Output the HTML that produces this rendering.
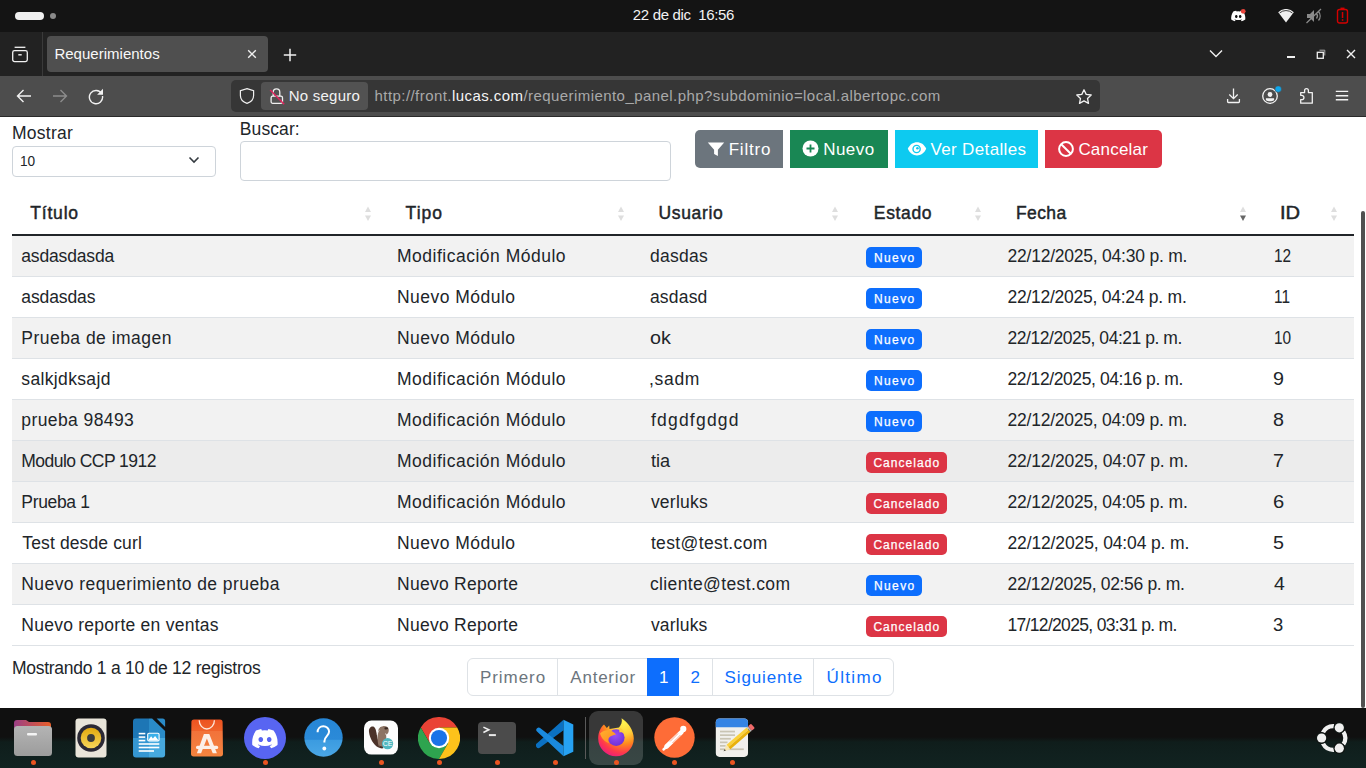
<!DOCTYPE html>
<html><head><meta charset="utf-8"><title>Requerimientos</title>
<style>
html,body{margin:0;padding:0;width:1366px;height:768px;overflow:hidden;background:#fff;font-family:"Liberation Sans",sans-serif;}
.r{position:absolute;display:block;}
.t{position:absolute;white-space:pre;font-family:"Liberation Sans",sans-serif;}
</style></head><body>
<div class="r" style="left:0px;top:0px;width:1366px;height:32px;background:#141414;"></div>
<div class="r" style="left:15px;top:12px;width:29px;height:8px;background:#f0f0f0;border-radius:4px;"></div>
<div class="r" style="left:50px;top:13px;width:6px;height:6px;background:#8a8a8a;border-radius:50%;"></div>
<span class="t" style="left:632.80px;top:7px;font-size:15px;line-height:15px;color:#f2f2f2;letter-spacing:-0.340px;">22 de dic  16:56</span>
<svg class="r" style="left:1229px;top:8px;" width="20" height="16" viewBox="0 0 20 16"><path fill="#fff" d="M14.2 3.6A12 12 0 0 0 11.3 2.7l-.4.8a11 11 0 0 0-3.3 0l-.4-.8A12 12 0 0 0 4.3 3.6C2.5 6.3 2 8.9 2.2 11.5a12 12 0 0 0 3.6 1.8l.8-1.2-1.3-.6.3-.3a8.5 8.5 0 0 0 7.3 0l.3.3-1.3.6.8 1.2a12 12 0 0 0 3.6-1.8c.3-3-.5-5.6-2.1-7.9zM7.3 9.9c-.7 0-1.3-.7-1.3-1.5s.6-1.5 1.3-1.5 1.3.7 1.3 1.5-.6 1.5-1.3 1.5zm3.9 0c-.7 0-1.3-.7-1.3-1.5s.6-1.5 1.3-1.5 1.3.7 1.3 1.5-.6 1.5-1.3 1.5z"/><circle cx="14.2" cy="3.3" r="2.4" fill="#e8453c"/></svg>
<svg class="r" style="left:1277px;top:9px;" width="18" height="14" viewBox="0 0 18 14"><path fill="#f0f0f0" d="M1.2 3.2A11 11 0 0 1 16.8 3.2L9 13.4z"/><path fill="none" stroke="#141414" stroke-width="0.8" d="M2.6 4.0A9.6 9.6 0 0 1 15.4 4.0"/></svg>
<svg class="r" style="left:1305px;top:8px;" width="18" height="16" viewBox="0 0 18 16"><path fill="#8a8a8a" d="M2 6h3l4-4v12l-4-4H2z"/><path fill="none" stroke="#8a8a8a" stroke-width="1.3" d="M11.5 5.5a4 4 0 0 1 0 5M13.5 3.5a7 7 0 0 1 0 9M1.5 15L16 1"/></svg>
<svg class="r" style="left:1336px;top:7px;" width="13" height="17" viewBox="0 0 13 17"><rect x="1.5" y="2.5" width="10" height="13.5" rx="2" fill="none" stroke="#d40000" stroke-width="1.4"/><rect x="4.5" y="0.6" width="4" height="1.6" fill="#d40000"/><rect x="5.8" y="5" width="1.5" height="6" fill="#d40000"/><rect x="5.8" y="12.2" width="1.5" height="1.6" fill="#d40000"/></svg>
<div class="r" style="left:0px;top:32px;width:1366px;height:44px;background:#222222;"></div>
<div class="r" style="left:42px;top:32px;width:1px;height:44px;background:#3a3a3a;"></div>
<svg class="r" style="left:10px;top:44px;" width="20" height="20" viewBox="0 0 20 20"><rect x="2.7" y="6.6" width="14.6" height="11" rx="1.8" fill="none" stroke="#f2f2f2" stroke-width="1.3"/><path d="M4.6 3.3h10.8" stroke="#f2f2f2" stroke-width="1.3" fill="none"/><path d="M8.3 10.8h3.4" stroke="#f2f2f2" stroke-width="1.4"/></svg>
<div class="r" style="left:47px;top:36px;width:221px;height:36px;background:#4f4f4f;border-radius:4px;"></div>
<span class="t" style="left:54.40px;top:46px;font-size:15px;line-height:15px;color:#f8f8f8;letter-spacing:0.015px;">Requerimientos</span>
<svg class="r" style="left:246px;top:48px;" width="12" height="12" viewBox="0 0 12 12"><path d="M2.2 2.2l7.6 7.6M9.8 2.2l-7.6 7.6" stroke="#f0f0f0" stroke-width="1.4" fill="none"/></svg>
<svg class="r" style="left:282px;top:47px;" width="16" height="16" viewBox="0 0 16 16"><path d="M8 1.8v12.4M1.8 8h12.4" stroke="#f0f0f0" stroke-width="1.5" fill="none"/></svg>
<svg class="r" style="left:1208px;top:48px;" width="16" height="12" viewBox="0 0 16 12"><path d="M2 2.5l6 6 6-6" stroke="#f0f0f0" stroke-width="1.4" fill="none"/></svg>
<div class="r" style="left:1287px;top:56px;width:8px;height:2px;background:#f0f0f0;"></div>
<svg class="r" style="left:1315px;top:48px;" width="12" height="12" viewBox="0 0 12 12"><rect x="2.3" y="4.3" width="6" height="6" fill="none" stroke="#f0f0f0" stroke-width="1.3"/><path d="M4.5 2.2h5.3v5.3" stroke="#aaa" stroke-width="1" fill="none"/></svg>
<svg class="r" style="left:1345px;top:48px;" width="12" height="12" viewBox="0 0 12 12"><path d="M2 2l8 8M10 2l-8 8" stroke="#f0f0f0" stroke-width="1.4" fill="none"/></svg>
<div class="r" style="left:0px;top:76px;width:1366px;height:40px;background:#4d4d4d;"></div>
<div class="r" style="left:0px;top:116px;width:1366px;height:1px;background:#2a2a2a;"></div>
<svg class="r" style="left:15px;top:88px;" width="18" height="16" viewBox="0 0 18 16"><path d="M16 8H2.5M8.5 2L2.5 8l6 6" stroke="#f2f2f2" stroke-width="1.4" fill="none"/></svg>
<svg class="r" style="left:51px;top:88px;" width="18" height="16" viewBox="0 0 18 16"><path d="M2 8h13.5M9.5 2l6 6-6 6" stroke="#8c8c8c" stroke-width="1.4" fill="none"/></svg>
<svg class="r" style="left:87px;top:87px;" width="18" height="18" viewBox="0 0 18 18"><path d="M14.7 6.8A6.6 6.6 0 1 0 15.5 9" stroke="#f2f2f2" stroke-width="1.4" fill="none"/><path d="M16 1.8v5.9h-5.9z" fill="#f2f2f2"/></svg>
<div class="r" style="left:231px;top:80px;width:869px;height:32px;background:#363636;border-radius:5px;"></div>
<svg class="r" style="left:238px;top:87px;" width="18" height="18" viewBox="0 0 18 18"><path d="M9 1.6L15.6 3.8V8.5C15.6 12.5 12.6 15.2 9 16.4 5.4 15.2 2.4 12.5 2.4 8.5V3.8z" stroke="#f0f0f0" stroke-width="1.2" fill="none"/></svg>
<div class="r" style="left:261px;top:82px;width:107px;height:28px;background:#525252;border-radius:4px;"></div>
<svg class="r" style="left:268px;top:87px;" width="18" height="18" viewBox="0 0 18 18"><path d="M5.2 9.2V5.2a3.3 3.3 0 0 1 6.6 0V9.2" stroke="#f0f0f0" stroke-width="1.3" fill="none"/><rect x="3.1" y="9.2" width="11.4" height="7.1" rx="1.6" fill="none" stroke="#f0f0f0" stroke-width="1.3"/><path d="M2.2 3L16.2 17.2" stroke="#e0245e" stroke-width="1.5"/></svg>
<span class="t" style="left:288.70px;top:88px;font-size:15px;line-height:15px;color:#f2f2f2;letter-spacing:0.250px;">No seguro</span>
<span class="t" style="left:374.50px;top:88px;font-size:15px;line-height:15px;color:#a9a9a9;letter-spacing:0.438px"><span style="color:#a9a9a9">http://front.</span><span style="color:#f4f4f4">lucas.com</span><span style="color:#a9a9a9">/requerimiento_panel.php?subdominio=local.albertopc.com</span></span>
<svg class="r" style="left:1075px;top:88px;" width="18" height="17" viewBox="0 0 18 17"><path d="M9 1.8l2.2 4.6 5 .6-3.7 3.4 1 5-4.5-2.5-4.5 2.5 1-5L1.8 7l5-.6z" stroke="#f2f2f2" stroke-width="1.3" fill="none" stroke-linejoin="round"/></svg>
<svg class="r" style="left:1225px;top:87px;" width="17" height="17" viewBox="0 0 17 17"><path d="M8.5 1.5v10M4.3 7.5l4.2 4.2 4.2-4.2" stroke="#f2f2f2" stroke-width="1.3" fill="none"/><path d="M2.6 12.1v2.6c0 .5.3.8.8.8h10.2c.5 0 .8-.3.8-.8v-2.6" stroke="#f2f2f2" stroke-width="1.3" fill="none"/></svg>
<svg class="r" style="left:1261px;top:86px;" width="21" height="19" viewBox="0 0 21 19"><circle cx="9" cy="10" r="7.3" stroke="#f2f2f2" stroke-width="1.3" fill="none"/><circle cx="9" cy="8.5" r="2.4" fill="#f2f2f2"/><path d="M4.9 12.3h8.2v1.6c-1.2 1-2.5 1.4-4.1 1.4s-2.9-.4-4.1-1.4z" fill="#f2f2f2"/><circle cx="17.2" cy="3.1" r="3.3" fill="#0ea5e9" stroke="#4d4d4d" stroke-width="0.6"/></svg>
<svg class="r" style="left:1298px;top:87px;" width="17" height="18" viewBox="0 0 17 18"><path d="M2.7 5.6H6.6V3.5a1.9 1.9 0 0 1 3.8 0V5.6H14.3V16.2H2.7V12.6H3.8a2.15 2.15 0 0 0 0-4.3H2.7z" stroke="#f2f2f2" stroke-width="1.3" fill="none" stroke-linejoin="round"/></svg>
<svg class="r" style="left:1334px;top:89px;" width="16" height="14" viewBox="0 0 16 14"><path d="M1.8 2.4h12.4M1.8 6.7h12.4M1.8 10.7h12.4" stroke="#f2f2f2" stroke-width="1.4" fill="none"/></svg>
<div class="r" style="left:0px;top:117px;width:1366px;height:591px;background:#ffffff;"></div>
<span class="t" style="left:12.00px;top:125px;font-size:17.5px;line-height:17.5px;color:#212529;letter-spacing:0.267px;">Mostrar</span>
<div class="r" style="left:12px;top:146px;width:204px;height:31px;background:#fff;border:1px solid #ced4da;border-radius:4px;box-sizing:border-box;"></div>
<span class="t" style="left:20.22px;top:153px;font-size:15.5px;line-height:15.5px;color:#212529;transform:scaleX(0.880);transform-origin:0 0;">10</span>
<svg class="r" style="left:186px;top:154px;" width="16" height="12" viewBox="0 0 16 12"><path d="M3.5 3.5l4.5 4.5 4.5-4.5" stroke="#343a40" stroke-width="1.6" fill="none"/></svg>
<span class="t" style="left:239.80px;top:121px;font-size:17.5px;line-height:17.5px;color:#212529;letter-spacing:0.100px;">Buscar:</span>
<div class="r" style="left:240px;top:141px;width:431px;height:40px;background:#fff;border:1px solid #ced4da;border-radius:4px;box-sizing:border-box;"></div>
<div class="r" style="left:695px;top:130px;width:88px;height:38px;background:#6c757d;border-radius:5px 0 0 5px;"></div>
<svg class="r" style="left:706px;top:141px;" width="20" height="16" viewBox="0 0 20 16"><path d="M1.8 1.5h16.4l-6.3 7.2v6.2l-3.8-1.8V8.7z" fill="#fff"/></svg>
<span class="t" style="left:728.70px;top:141px;font-size:17px;line-height:17px;color:#ffffff;letter-spacing:0.800px;">Filtro</span>
<div class="r" style="left:790px;top:130px;width:98px;height:38px;background:#198754;"></div>
<svg class="r" style="left:802px;top:140px;" width="17" height="17" viewBox="0 0 17 17"><circle cx="8.5" cy="8.5" r="8" fill="#fff"/><path d="M8.5 4.5v8M4.5 8.5h8" stroke="#198754" stroke-width="1.8"/></svg>
<span class="t" style="left:823.20px;top:141px;font-size:17px;line-height:17px;color:#ffffff;letter-spacing:0.450px;">Nuevo</span>
<div class="r" style="left:895px;top:130px;width:143px;height:38px;background:#0dcaf0;"></div>
<svg class="r" style="left:907px;top:141px;" width="20" height="16" viewBox="0 0 20 16"><path d="M0.8 7.8C2.8 3.2 6.2 1.2 10 1.2s7.2 2 9.2 6.6c-2 4.6-5.4 6.6-9.2 6.6S2.8 12.4 0.8 7.8z" fill="#fff"/><circle cx="9.6" cy="8" r="4.3" fill="#0dcaf0"/><circle cx="9.6" cy="8" r="2.9" fill="#fff"/><circle cx="10.4" cy="7.3" r="1.3" fill="#0dcaf0"/></svg>
<span class="t" style="left:930.40px;top:141px;font-size:17px;line-height:17px;color:#ffffff;letter-spacing:0.364px;">Ver Detalles</span>
<div class="r" style="left:1045px;top:130px;width:117px;height:38px;background:#dc3545;border-radius:0 5px 5px 0;"></div>
<svg class="r" style="left:1058px;top:141px;" width="16" height="16" viewBox="0 0 16 16"><circle cx="8" cy="8" r="6.9" stroke="#fff" stroke-width="2" fill="none"/><path d="M3.2 3.2l9.6 9.6" stroke="#fff" stroke-width="2"/></svg>
<span class="t" style="left:1078.40px;top:141px;font-size:17px;line-height:17px;color:#ffffff;letter-spacing:0.200px;">Cancelar</span>
<span class="t" style="left:30.30px;top:205px;font-size:17.5px;line-height:17.5px;color:#212529;letter-spacing:0.800px;-webkit-text-stroke:0.45px #212529;">Título</span>
<span class="t" style="left:405.60px;top:205px;font-size:17.5px;line-height:17.5px;color:#212529;letter-spacing:1.000px;-webkit-text-stroke:0.45px #212529;">Tipo</span>
<span class="t" style="left:658.50px;top:205px;font-size:17.5px;line-height:17.5px;color:#212529;letter-spacing:0.667px;-webkit-text-stroke:0.45px #212529;">Usuario</span>
<span class="t" style="left:873.80px;top:205px;font-size:17.5px;line-height:17.5px;color:#212529;letter-spacing:0.660px;-webkit-text-stroke:0.45px #212529;">Estado</span>
<span class="t" style="left:1016.00px;top:205px;font-size:17.5px;line-height:17.5px;color:#212529;letter-spacing:0.400px;-webkit-text-stroke:0.45px #212529;">Fecha</span>
<span class="t" style="left:1280.10px;top:205px;font-size:17.5px;line-height:17.5px;color:#212529;transform:scaleX(1.150);transform-origin:0 0;-webkit-text-stroke:0.45px #212529;">ID</span>
<svg class="r" style="left:364px;top:205px;" width="8" height="18" viewBox="0 0 8 18"><path d="M1 7L4 1.5 7 7z" fill="#dedede"/><path d="M1 10.5L4 16 7 10.5z" fill="#dedede"/></svg>
<svg class="r" style="left:617px;top:205px;" width="8" height="18" viewBox="0 0 8 18"><path d="M1 7L4 1.5 7 7z" fill="#dedede"/><path d="M1 10.5L4 16 7 10.5z" fill="#dedede"/></svg>
<svg class="r" style="left:831px;top:205px;" width="8" height="18" viewBox="0 0 8 18"><path d="M1 7L4 1.5 7 7z" fill="#dedede"/><path d="M1 10.5L4 16 7 10.5z" fill="#dedede"/></svg>
<svg class="r" style="left:974px;top:205px;" width="8" height="18" viewBox="0 0 8 18"><path d="M1 7L4 1.5 7 7z" fill="#dedede"/><path d="M1 10.5L4 16 7 10.5z" fill="#dedede"/></svg>
<svg class="r" style="left:1239px;top:205px;" width="8" height="18" viewBox="0 0 8 18"><path d="M1 7L4 1.5 7 7z" fill="#dedede"/><path d="M1 10.5L4 16 7 10.5z" fill="#666"/></svg>
<svg class="r" style="left:1330px;top:205px;" width="8" height="18" viewBox="0 0 8 18"><path d="M1 7L4 1.5 7 7z" fill="#dedede"/><path d="M1 10.5L4 16 7 10.5z" fill="#dedede"/></svg>
<div class="r" style="left:12px;top:234px;width:1342px;height:2px;background:#212529;"></div>
<div class="r" style="left:12px;top:236px;width:1342px;height:40px;background:#f2f2f2;"></div>
<div class="r" style="left:12px;top:276px;width:1342px;height:1px;background:#dee2e6;"></div>
<span class="t" style="left:21.30px;top:248px;font-size:17.5px;line-height:17.5px;color:#212529;letter-spacing:-0.156px;">asdasdasda</span>
<span class="t" style="left:397.00px;top:248px;font-size:17.5px;line-height:17.5px;color:#212529;letter-spacing:0.500px;">Modificación Módulo</span>
<span class="t" style="left:649.90px;top:248px;font-size:17.5px;line-height:17.5px;color:#212529;letter-spacing:0.280px;">dasdas</span>
<div class="r" style="left:866px;top:247px;width:56px;height:21px;background:#0d6efd;border-radius:5px;"></div>
<span class="t" style="left:874.00px;top:252px;font-size:12px;line-height:12px;color:#ffffff;letter-spacing:1.375px;-webkit-text-stroke:0.25px #fff;">Nuevo</span>
<span class="t" style="left:1007.50px;top:248px;font-size:17.5px;line-height:17.5px;color:#212529;letter-spacing:-0.227px;">22/12/2025, 04:30 p. m.</span>
<span class="t" style="left:1273.52px;top:248px;font-size:17.5px;line-height:17.5px;color:#212529;transform:scaleX(0.880);transform-origin:0 0;">12</span>
<div class="r" style="left:12px;top:277px;width:1342px;height:40px;background:#ffffff;"></div>
<div class="r" style="left:12px;top:317px;width:1342px;height:1px;background:#dee2e6;"></div>
<span class="t" style="left:21.30px;top:289px;font-size:17.5px;line-height:17.5px;color:#212529;letter-spacing:-0.114px;">asdasdas</span>
<span class="t" style="left:397.00px;top:289px;font-size:17.5px;line-height:17.5px;color:#212529;letter-spacing:0.473px;">Nuevo Módulo</span>
<span class="t" style="left:649.90px;top:289px;font-size:17.5px;line-height:17.5px;color:#212529;letter-spacing:0.200px;">asdasd</span>
<div class="r" style="left:866px;top:288px;width:56px;height:21px;background:#0d6efd;border-radius:5px;"></div>
<span class="t" style="left:874.00px;top:293px;font-size:12px;line-height:12px;color:#ffffff;letter-spacing:1.375px;-webkit-text-stroke:0.25px #fff;">Nuevo</span>
<span class="t" style="left:1007.50px;top:289px;font-size:17.5px;line-height:17.5px;color:#212529;letter-spacing:-0.255px;">22/12/2025, 04:24 p. m.</span>
<span class="t" style="left:1273.52px;top:289px;font-size:17.5px;line-height:17.5px;color:#212529;transform:scaleX(0.880);transform-origin:0 0;">11</span>
<div class="r" style="left:12px;top:318px;width:1342px;height:40px;background:#f2f2f2;"></div>
<div class="r" style="left:12px;top:358px;width:1342px;height:1px;background:#dee2e6;"></div>
<span class="t" style="left:21.30px;top:330px;font-size:17.5px;line-height:17.5px;color:#212529;letter-spacing:0.473px;">Prueba de imagen</span>
<span class="t" style="left:397.00px;top:330px;font-size:17.5px;line-height:17.5px;color:#212529;letter-spacing:0.473px;">Nuevo Módulo</span>
<span class="t" style="left:649.77px;top:330px;font-size:17.5px;line-height:17.5px;color:#212529;transform:scaleX(1.129);transform-origin:0 0;">ok</span>
<div class="r" style="left:866px;top:329px;width:56px;height:21px;background:#0d6efd;border-radius:5px;"></div>
<span class="t" style="left:874.00px;top:334px;font-size:12px;line-height:12px;color:#ffffff;letter-spacing:1.375px;-webkit-text-stroke:0.25px #fff;">Nuevo</span>
<span class="t" style="left:1007.50px;top:330px;font-size:17.5px;line-height:17.5px;color:#212529;letter-spacing:-0.455px;">22/12/2025, 04:21 p. m.</span>
<span class="t" style="left:1273.52px;top:330px;font-size:17.5px;line-height:17.5px;color:#212529;transform:scaleX(0.880);transform-origin:0 0;">10</span>
<div class="r" style="left:12px;top:359px;width:1342px;height:40px;background:#ffffff;"></div>
<div class="r" style="left:12px;top:399px;width:1342px;height:1px;background:#dee2e6;"></div>
<span class="t" style="left:21.30px;top:371px;font-size:17.5px;line-height:17.5px;color:#212529;letter-spacing:0.350px;">salkjdksajd</span>
<span class="t" style="left:397.00px;top:371px;font-size:17.5px;line-height:17.5px;color:#212529;letter-spacing:0.500px;">Modificación Módulo</span>
<span class="t" style="left:648.90px;top:371px;font-size:17.5px;line-height:17.5px;color:#212529;letter-spacing:0.725px;">,sadm</span>
<div class="r" style="left:866px;top:370px;width:56px;height:21px;background:#0d6efd;border-radius:5px;"></div>
<span class="t" style="left:874.00px;top:375px;font-size:12px;line-height:12px;color:#ffffff;letter-spacing:1.375px;-webkit-text-stroke:0.25px #fff;">Nuevo</span>
<span class="t" style="left:1007.50px;top:371px;font-size:17.5px;line-height:17.5px;color:#212529;letter-spacing:-0.409px;">22/12/2025, 04:16 p. m.</span>
<span class="t" style="left:1273.28px;top:371px;font-size:17.5px;line-height:17.5px;color:#212529;transform:scaleX(1.125);transform-origin:0 0;">9</span>
<div class="r" style="left:12px;top:400px;width:1342px;height:40px;background:#f2f2f2;"></div>
<div class="r" style="left:12px;top:440px;width:1342px;height:1px;background:#dee2e6;"></div>
<span class="t" style="left:21.30px;top:412px;font-size:17.5px;line-height:17.5px;color:#212529;letter-spacing:0.409px;">prueba 98493</span>
<span class="t" style="left:397.00px;top:412px;font-size:17.5px;line-height:17.5px;color:#212529;letter-spacing:0.500px;">Modificación Módulo</span>
<span class="t" style="left:650.90px;top:412px;font-size:17.5px;line-height:17.5px;color:#212529;letter-spacing:1.225px;">fdgdfgdgd</span>
<div class="r" style="left:866px;top:411px;width:56px;height:21px;background:#0d6efd;border-radius:5px;"></div>
<span class="t" style="left:874.00px;top:416px;font-size:12px;line-height:12px;color:#ffffff;letter-spacing:1.375px;-webkit-text-stroke:0.25px #fff;">Nuevo</span>
<span class="t" style="left:1007.50px;top:412px;font-size:17.5px;line-height:17.5px;color:#212529;letter-spacing:-0.227px;">22/12/2025, 04:09 p. m.</span>
<span class="t" style="left:1273.28px;top:412px;font-size:17.5px;line-height:17.5px;color:#212529;transform:scaleX(1.125);transform-origin:0 0;">8</span>
<div class="r" style="left:12px;top:441px;width:1342px;height:40px;background:#ececec;"></div>
<div class="r" style="left:12px;top:481px;width:1342px;height:1px;background:#dee2e6;"></div>
<span class="t" style="left:21.30px;top:453px;font-size:17.5px;line-height:17.5px;color:#212529;letter-spacing:-0.543px;">Modulo CCP 1912</span>
<span class="t" style="left:397.00px;top:453px;font-size:17.5px;line-height:17.5px;color:#212529;letter-spacing:0.500px;">Modificación Módulo</span>
<span class="t" style="left:650.90px;top:453px;font-size:17.5px;line-height:17.5px;color:#212529;transform:scaleX(1.037);transform-origin:0 0;">tia</span>
<div class="r" style="left:866px;top:452px;width:81px;height:21px;background:#dc3545;border-radius:5px;"></div>
<span class="t" style="left:873.40px;top:457px;font-size:12px;line-height:12px;color:#ffffff;letter-spacing:1.050px;-webkit-text-stroke:0.25px #fff;">Cancelado</span>
<span class="t" style="left:1007.50px;top:453px;font-size:17.5px;line-height:17.5px;color:#212529;letter-spacing:-0.182px;">22/12/2025, 04:07 p. m.</span>
<span class="t" style="left:1273.28px;top:453px;font-size:17.5px;line-height:17.5px;color:#212529;transform:scaleX(1.125);transform-origin:0 0;">7</span>
<div class="r" style="left:12px;top:482px;width:1342px;height:40px;background:#f2f2f2;"></div>
<div class="r" style="left:12px;top:522px;width:1342px;height:1px;background:#dee2e6;"></div>
<span class="t" style="left:21.30px;top:494px;font-size:17.5px;line-height:17.5px;color:#212529;letter-spacing:-0.329px;">Prueba 1</span>
<span class="t" style="left:397.00px;top:494px;font-size:17.5px;line-height:17.5px;color:#212529;letter-spacing:0.500px;">Modificación Módulo</span>
<span class="t" style="left:650.90px;top:494px;font-size:17.5px;line-height:17.5px;color:#212529;letter-spacing:0.233px;">verluks</span>
<div class="r" style="left:866px;top:493px;width:81px;height:21px;background:#dc3545;border-radius:5px;"></div>
<span class="t" style="left:873.40px;top:498px;font-size:12px;line-height:12px;color:#ffffff;letter-spacing:1.050px;-webkit-text-stroke:0.25px #fff;">Cancelado</span>
<span class="t" style="left:1007.50px;top:494px;font-size:17.5px;line-height:17.5px;color:#212529;letter-spacing:-0.205px;">22/12/2025, 04:05 p. m.</span>
<span class="t" style="left:1273.25px;top:494px;font-size:17.5px;line-height:17.5px;color:#212529;transform:scaleX(1.150);transform-origin:0 0;">6</span>
<div class="r" style="left:12px;top:523px;width:1342px;height:40px;background:#ffffff;"></div>
<div class="r" style="left:12px;top:563px;width:1342px;height:1px;background:#dee2e6;"></div>
<span class="t" style="left:22.30px;top:535px;font-size:17.5px;line-height:17.5px;color:#212529;letter-spacing:0.129px;">Test desde curl</span>
<span class="t" style="left:397.00px;top:535px;font-size:17.5px;line-height:17.5px;color:#212529;letter-spacing:0.473px;">Nuevo Módulo</span>
<span class="t" style="left:650.90px;top:535px;font-size:17.5px;line-height:17.5px;color:#212529;letter-spacing:0.367px;">test@test.com</span>
<div class="r" style="left:866px;top:534px;width:81px;height:21px;background:#dc3545;border-radius:5px;"></div>
<span class="t" style="left:873.40px;top:539px;font-size:12px;line-height:12px;color:#ffffff;letter-spacing:1.050px;-webkit-text-stroke:0.25px #fff;">Cancelado</span>
<span class="t" style="left:1007.50px;top:535px;font-size:17.5px;line-height:17.5px;color:#212529;letter-spacing:-0.136px;">22/12/2025, 04:04 p. m.</span>
<span class="t" style="left:1273.28px;top:535px;font-size:17.5px;line-height:17.5px;color:#212529;transform:scaleX(1.125);transform-origin:0 0;">5</span>
<div class="r" style="left:12px;top:564px;width:1342px;height:40px;background:#f2f2f2;"></div>
<div class="r" style="left:12px;top:604px;width:1342px;height:1px;background:#dee2e6;"></div>
<span class="t" style="left:21.30px;top:576px;font-size:17.5px;line-height:17.5px;color:#212529;letter-spacing:0.429px;">Nuevo requerimiento de prueba</span>
<span class="t" style="left:397.00px;top:576px;font-size:17.5px;line-height:17.5px;color:#212529;letter-spacing:0.267px;">Nuevo Reporte</span>
<span class="t" style="left:649.90px;top:576px;font-size:17.5px;line-height:17.5px;color:#212529;letter-spacing:0.373px;">cliente@test.com</span>
<div class="r" style="left:866px;top:575px;width:56px;height:21px;background:#0d6efd;border-radius:5px;"></div>
<span class="t" style="left:874.00px;top:580px;font-size:12px;line-height:12px;color:#ffffff;letter-spacing:1.375px;-webkit-text-stroke:0.25px #fff;">Nuevo</span>
<span class="t" style="left:1007.50px;top:576px;font-size:17.5px;line-height:17.5px;color:#212529;letter-spacing:-0.336px;">22/12/2025, 02:56 p. m.</span>
<span class="t" style="left:1274.40px;top:576px;font-size:17.5px;line-height:17.5px;color:#212529;transform:scaleX(1.111);transform-origin:0 0;">4</span>
<div class="r" style="left:12px;top:605px;width:1342px;height:40px;background:#ffffff;"></div>
<div class="r" style="left:12px;top:645px;width:1342px;height:1px;background:#dee2e6;"></div>
<span class="t" style="left:21.30px;top:617px;font-size:17.5px;line-height:17.5px;color:#212529;letter-spacing:0.255px;">Nuevo reporte en ventas</span>
<span class="t" style="left:397.00px;top:617px;font-size:17.5px;line-height:17.5px;color:#212529;letter-spacing:0.267px;">Nuevo Reporte</span>
<span class="t" style="left:650.90px;top:617px;font-size:17.5px;line-height:17.5px;color:#212529;letter-spacing:0.167px;">varluks</span>
<div class="r" style="left:866px;top:616px;width:81px;height:21px;background:#dc3545;border-radius:5px;"></div>
<span class="t" style="left:873.40px;top:621px;font-size:12px;line-height:12px;color:#ffffff;letter-spacing:1.050px;-webkit-text-stroke:0.25px #fff;">Cancelado</span>
<span class="t" style="left:1007.50px;top:617px;font-size:17.5px;line-height:17.5px;color:#212529;letter-spacing:-0.682px;">17/12/2025, 03:31 p. m.</span>
<span class="t" style="left:1273.35px;top:617px;font-size:17.5px;line-height:17.5px;color:#212529;transform:scaleX(1.050);transform-origin:0 0;">3</span>
<span class="t" style="left:11.90px;top:660px;font-size:17.5px;line-height:17.5px;color:#212529;letter-spacing:-0.258px;">Mostrando 1 a 10 de 12 registros</span>
<div class="r" style="left:467px;top:658px;width:427px;height:38px;background:#fff;border:1px solid #dee2e6;border-radius:6px;box-sizing:border-box;"></div>
<div class="r" style="left:557px;top:658px;width:1px;height:38px;background:#dee2e6;"></div>
<div class="r" style="left:647px;top:658px;width:32px;height:38px;background:#0d6efd;"></div>
<div class="r" style="left:712px;top:658px;width:1px;height:38px;background:#dee2e6;"></div>
<div class="r" style="left:813px;top:658px;width:1px;height:38px;background:#dee2e6;"></div>
<span class="t" style="left:479.90px;top:669px;font-size:17px;line-height:17px;color:#6c757d;letter-spacing:0.950px;">Primero</span>
<span class="t" style="left:570.30px;top:669px;font-size:17px;line-height:17px;color:#6c757d;letter-spacing:0.771px;">Anterior</span>
<span class="t" style="left:659.00px;top:669px;font-size:17px;line-height:17px;color:#ffffff;">1</span>
<span class="t" style="left:690.40px;top:669px;font-size:17px;line-height:17px;color:#0d6efd;">2</span>
<span class="t" style="left:724.60px;top:669px;font-size:17px;line-height:17px;color:#0d6efd;letter-spacing:0.850px;">Siguiente</span>
<span class="t" style="left:826.50px;top:669px;font-size:17px;line-height:17px;color:#0d6efd;letter-spacing:1.360px;">Último</span>
<div class="r" style="left:1361px;top:211px;width:4px;height:497px;background:#505050;border-radius:2px;"></div>
<div class="r" style="left:0;top:708px;width:1366px;height:60px;background:linear-gradient(180deg,#101010 0px,#101010 29px,#0f1d1b 34px,#10201e 45px,#112321 60px);"></div>
<div class="r" style="left:589px;top:711px;width:54px;height:54px;border-radius:9px;background:rgba(255,255,255,0.17);"></div>
<div class="r" style="left:585px;top:717px;width:1px;height:42px;background:#5a5a5a;"></div>
<svg class="r" style="left:13px;top:719px;" width="40" height="38" viewBox="0 0 40 38"><defs><linearGradient id="fg1" x1="0" x2="1"><stop offset="0" stop-color="#9b3f86"/><stop offset="1" stop-color="#e9602a"/></linearGradient>
    <linearGradient id="fg2" x1="0" y1="0" x2="0" y2="1"><stop offset="0" stop-color="#b4b4b4"/><stop offset="1" stop-color="#9c9c9c"/></linearGradient></defs>
    <path d="M1 4a3 3 0 0 1 3-3h9l3 2h19a3 3 0 0 1 3 3v10H1z" fill="url(#fg1)"/>
    <rect x="1" y="7" width="38" height="30" rx="3.5" fill="url(#fg2)"/>
    <rect x="14" y="14" width="10" height="2.6" rx="1" fill="#f4f4f4"/></svg>
<svg class="r" style="left:75px;top:718px;" width="32" height="40" viewBox="0 0 32 40"><rect x="0.5" y="0.5" width="31" height="39" rx="3" fill="#e9e5da"/>
    <defs><linearGradient id="ry" x1="0" y1="0" x2="0" y2="1"><stop offset="0" stop-color="#e2a90e"/><stop offset="1" stop-color="#f7d65a"/></linearGradient></defs><circle cx="16" cy="20" r="13.8" fill="#2b2935"/><circle cx="16" cy="20" r="10.3" fill="url(#ry)"/><circle cx="16" cy="20" r="3.9" fill="#3b3b3b"/></svg>
<svg class="r" style="left:133px;top:718px;" width="33" height="40" viewBox="0 0 33 40"><defs><clipPath id="wc"><path d="M3 0.5h16.1L32.1 12.9V36.6a3 3 0 0 1-3 3H3a3 3 0 0 1-3-3V3.5a3 3 0 0 1 3-3z"/></clipPath></defs>
    <g clip-path="url(#wc)"><rect x="0" y="0" width="16" height="20" fill="#1d76b5"/><rect x="16" y="0" width="17" height="20" fill="#2a8bc8"/><rect x="0" y="20" width="16" height="20" fill="#3597d2"/><rect x="16" y="20" width="17" height="20" fill="#46a9de"/></g>
    <path d="M23.6 0.5H29.6a2.5 2.5 0 0 1 2.5 2.5V9z" fill="#2a8bc8"/>
    <g fill="#fff"><rect x="5.7" y="14.8" width="6.6" height="1.6"/><rect x="5.7" y="18.3" width="6.6" height="1.6"/><rect x="5.7" y="21.8" width="6.6" height="1.6"/>
    <rect x="5.7" y="25.2" width="20.6" height="1.6"/><rect x="5.7" y="28.7" width="20.6" height="1.6"/><rect x="5.7" y="32.2" width="15.3" height="1.6"/></g>
    <rect x="14.7" y="15.3" width="11.4" height="7.6" rx="1.2" fill="#3ab0ea" stroke="#fff" stroke-width="1.1"/><path d="M15.3 22.3l2.8-4 1.8 2.2 2.2-2.6 3.3 4.4z" fill="#fff"/></svg>
<svg class="r" style="left:191px;top:719px;" width="32" height="38" viewBox="0 0 32 38"><defs><linearGradient id="ag" x1="0" y1="0" x2="0" y2="1"><stop offset="0" stop-color="#ec5220"/><stop offset="0.3" stop-color="#f0622a"/><stop offset="0.31" stop-color="#f2723a"/><stop offset="1" stop-color="#f4843f"/></linearGradient></defs>
    <path d="M3 0.4h26a2.6 2.6 0 0 1 2.6 2.6l.4 31.8a2.6 2.6 0 0 1-2.6 2.6H2.6A2.6 2.6 0 0 1 0 34.8L.4 3A2.6 2.6 0 0 1 3 0.4z" fill="url(#ag)"/>
    <path d="M8.2 1.2a7.6 8.8 0 0 0 15.2 0" fill="none" stroke="#fde6da" stroke-width="1.3"/>
    <path d="M12.9 15h5.4l7.6 19.2h-4.2l-5.8-14.6-5.8 14.6H5.9z" fill="#fcefe8"/>
    <rect x="5" y="26.8" width="22.2" height="3.1" rx="1.5" fill="#fcefe8"/></svg>
<svg class="r" style="left:244px;top:717px;" width="42" height="42" viewBox="0 0 42 42"><circle cx="21" cy="21" r="21" fill="#5865f2"/>
    <path fill="#fff" d="M29.6 13.6a21 21 0 0 0-5.2-1.6l-.7 1.4a19.5 19.5 0 0 0-5.8 0l-.7-1.4a21 21 0 0 0-5.2 1.6C8.7 18.5 7.8 23.3 8.3 28a21 21 0 0 0 6.4 3.2l1.4-2.2-2.2-1.1.5-.4a15 15 0 0 0 13 0l.5.4-2.2 1.1 1.4 2.2a21 21 0 0 0 6.4-3.2c.6-5.5-.9-10.3-3.9-14.4zM16.8 25.1c-1.3 0-2.3-1.2-2.3-2.6s1-2.6 2.3-2.6 2.3 1.2 2.3 2.6-1 2.6-2.3 2.6zm8.4 0c-1.3 0-2.3-1.2-2.3-2.6s1-2.6 2.3-2.6 2.3 1.2 2.3 2.6-1 2.6-2.3 2.6z"/></svg>
<svg class="r" style="left:304px;top:718px;" width="39" height="39" viewBox="0 0 39 39"><defs><linearGradient id="hg" x1="0" y1="0" x2="0" y2="1"><stop offset="0" stop-color="#2686d6"/><stop offset="0.55" stop-color="#2b8ad8"/><stop offset="0.56" stop-color="#3b9be0"/><stop offset="1" stop-color="#4aa7e6"/></linearGradient></defs>
    <circle cx="19.5" cy="19.5" r="19.2" fill="url(#hg)"/>
    <path d="M13.6 14.2c0-3.6 2.6-6 5.7-6s5.8 2.3 5.8 5.4c0 4.4-4.7 4.8-4.7 9.6v1.3" fill="none" stroke="#fff" stroke-width="2"/><circle cx="20.3" cy="30.5" r="1.9" fill="#fff"/></svg>
<svg class="r" style="left:364px;top:720px;" width="34" height="35" viewBox="0 0 34 35"><rect x="0" y="0.6" width="34" height="34" rx="7.5" fill="#fdfdfd"/>
    <path d="M8.6 6.5c-2.6 0-3.9 2.6-3.6 5.4.8 6.6 4.6 12.6 9 15.4 2 1.2 4.5 1.3 5.6.8L15.8 24c-2-3-2.6-7.6-3.4-11.6C11.8 9 10.8 6.5 8.6 6.5z" fill="#4b3229"/>
    <path d="M14.8 8.2c2-2.6 6.2-3 8.6-1.2 1.4 1.1 1.7 3 1.1 4.9-.5 1.4-1.4 2.3-2.4 2.9.4 3 .3 6.2-1.1 9.1-1.4 2.6-3.8 3.6-5.8 3.1-1.1-2.1-1.6-5.1-1.6-8.6 0-4 .2-7.9 1.2-10.2z" fill="#8d7464"/>
    <path d="M20.5 7.6c.9-.5 2.3-.6 3.2.1.6.5.3 1.3-.5 1.6-.9.3-2.1.2-2.7-.4z" fill="#3a2922"/>
    <path d="M14.2 9.5c.8-2.3 2.6-3.6 4.8-3.9M13.3 14.5c.5-2 1-3.4 1.8-4.2M21.6 13.5l.8 1.6" fill="none" stroke="#fff" stroke-width="0.8"/>
    <path d="M15.2 26c1 .9 2.8 1.3 4.5.6" fill="none" stroke="#3a2922" stroke-width="1"/>
    <circle cx="23.6" cy="23.7" r="5.6" fill="#4fb8c1"/><text x="23.6" y="26.2" font-family="Liberation Sans" font-size="7" fill="#fff" text-anchor="middle">CE</text></svg>
<svg class="r" style="left:418px;top:717px;" width="42" height="42" viewBox="0 0 42 42"><path d="M39.19 10.5A21 21 0 0 0 2.81 10.5L11.9 26.25 21 21 21 10.5z" fill="#ea4335"/>
    <path d="M2.81 10.5A21 21 0 0 0 21 42L30.1 26.25 21 21 11.9 26.25z" fill="#2ea44f"/>
    <path d="M21 42A21 21 0 0 0 39.19 10.5L21 10.5 21 21 30.1 26.25z" fill="#fcc21b"/>
    <circle cx="21" cy="21" r="10.2" fill="#fff"/><circle cx="21" cy="21" r="8.1" fill="#1a73e8"/></svg>
<svg class="r" style="left:478px;top:722px;" width="38" height="32" viewBox="0 0 38 32"><rect x="0" y="0" width="38" height="32" rx="4" fill="#4b4b4b"/>
    <path d="M5.4 5.1l5.4 2.7-5.4 2.7" fill="none" stroke="#f0f0f0" stroke-width="1.6"/><rect x="10.9" y="12.1" width="7" height="2" fill="#e8e8e8"/></svg>
<svg class="r" style="left:536px;top:719px;" width="38" height="38" viewBox="0 0 38 38"><path d="M27.5 11.2L4.1 28.5a2.1 2.1 0 0 1-3.1-4.3L27.5 0.7z" fill="#0b71c2"/>
    <path d="M27.5 26.9L4.4 9.3a2.1 2.1 0 0 0-3.4 3.3L27.5 37.3z" fill="#1a8ade"/>
    <path d="M27.5 0.7L37.3 5.4V32.7L27.5 37.3z" fill="#26a2f3"/></svg>
<svg class="r" style="left:597px;top:718px;" width="38" height="39" viewBox="0 0 38 39"><defs><radialGradient id="ffg" cx="0.72" cy="0.12" r="1.0"><stop offset="0" stop-color="#fff44f"/><stop offset="0.3" stop-color="#ffcf3a"/><stop offset="0.55" stop-color="#ff8a1e"/><stop offset="0.78" stop-color="#ff3a4a"/><stop offset="1" stop-color="#e8168a"/></radialGradient>
    <radialGradient id="ffp" cx="0.45" cy="0.35" r="0.7"><stop offset="0" stop-color="#9a4ff5"/><stop offset="1" stop-color="#6b2fd6"/></radialGradient>
    <linearGradient id="ffh" x1="0" y1="0" x2="1" y2="1"><stop offset="0" stop-color="#ffb02e"/><stop offset="1" stop-color="#ff8a1e"/></linearGradient></defs>
    <path d="M7 6.4C4 9 1.2 13.5 1.2 20.5A17.8 17.8 0 0 0 36.8 20.5C36.8 12 31 4.5 24.6 0.2C25.5 4 24 7 22 9.5L12.5 11 12.2 7.6 9.8 10z" fill="url(#ffg)"/>
    <circle cx="19.2" cy="19.6" r="8.4" fill="url(#ffp)"/>
    <path d="M3 15.5C6 12.5 10 11.8 13 12.6 15.2 13.2 17.2 14.6 19 16.6 16.2 17.2 13.4 18 12 19.8 11 21.4 11.2 23.6 12.4 25.2 8 24.2 4.5 20.5 3 15.5z" fill="url(#ffh)"/>
    <path d="M22 9.5C25 10.5 27.5 13 27.8 16 26 14.5 24 14 22.5 14.5z" fill="#ffcf3a"/></svg>
<svg class="r" style="left:654px;top:717px;" width="41" height="41" viewBox="0 0 41 41"><circle cx="20.5" cy="20.5" r="20.2" fill="#fe6c37"/>
    <circle cx="29.3" cy="11.9" r="3.1" fill="#fff"/>
    <path d="M27.5 15.2L12.5 29.5" stroke="#fff" stroke-width="4.6" stroke-linecap="round"/>
    <path d="M14 28.5L9.5 32.5" stroke="#fff" stroke-width="2.4" stroke-linecap="round"/>
    <path d="M22 20.5L17.5 23.5" stroke="#fff" stroke-width="1.6" stroke-linecap="round"/>
    <path d="M24 16.5l-8 8M26.5 18l-8 8" stroke="#fe6c37" stroke-width="0.6"/></svg>
<svg class="r" style="left:715px;top:718px;" width="40" height="40" viewBox="0 0 40 40"><rect x="0.8" y="0.5" width="32.2" height="38.4" rx="3.8" fill="#f1f0ed"/>
    <path d="M0.8 4.3a3.8 3.8 0 0 1 3.8-3.8h24.6a3.8 3.8 0 0 1 3.8 3.8V9.3H0.8z" fill="#3584e4"/>
    <g fill="#c9c4b3"><rect x="5" y="12.7" width="15" height="1.7"/><rect x="5" y="16.3" width="15" height="1.7"/><rect x="5" y="19.9" width="10.8" height="1.7"/><rect x="5" y="23.5" width="7.5" height="1.7"/><rect x="5" y="27" width="5.6" height="1.7"/><rect x="5" y="30.4" width="23.8" height="1.7"/></g>
    <g transform="translate(8.6,33.2) rotate(-40.8)">
    <path d="M0 0L6.5 -2.9V2.9z" fill="#f8e7b0"/><path d="M0 0L2.2 -1V1z" fill="#444"/>
    <rect x="6.5" y="-2.9" width="26.5" height="2.9" fill="#fbd13a"/><rect x="6.5" y="0" width="26.5" height="2.9" fill="#e9b10c"/>
    <rect x="33" y="-2.9" width="1.8" height="5.8" fill="#b9b9b9"/><rect x="34.8" y="-2.9" width="4" height="5.8" rx="1" fill="#f06a6a"/></g></svg>
<svg class="r" style="left:1316px;top:722px;" width="34" height="34" viewBox="0 0 34 34"><path d="M6.89 10.64A11.8 11.8 0 0 1 18.02 4.22M27.30 9.57A11.8 11.8 0 0 1 27.30 22.43M18.02 27.78A11.8 11.8 0 0 1 6.89 21.36" fill="none" stroke="#f0f0f0" stroke-width="4.2"/><circle cx="5.60" cy="16.00" r="5.9" fill="#101614"/><circle cx="23.30" cy="5.78" r="5.9" fill="#101614"/><circle cx="23.30" cy="26.22" r="5.9" fill="#101614"/><circle cx="5.60" cy="16.00" r="4.6" fill="#f0f0f0"/><circle cx="23.30" cy="5.78" r="4.6" fill="#f0f0f0"/><circle cx="23.30" cy="26.22" r="4.6" fill="#f0f0f0"/></svg>
<div class="r" style="left:30.5px;top:760px;width:5px;height:5px;border-radius:50%;background:#e95420;"></div>
<div class="r" style="left:262.5px;top:760px;width:5px;height:5px;border-radius:50%;background:#e95420;"></div>
<div class="r" style="left:378.5px;top:760px;width:5px;height:5px;border-radius:50%;background:#e95420;"></div>
<div class="r" style="left:436.5px;top:760px;width:5px;height:5px;border-radius:50%;background:#e95420;"></div>
<div class="r" style="left:494.5px;top:760px;width:5px;height:5px;border-radius:50%;background:#e95420;"></div>
<div class="r" style="left:552.5px;top:760px;width:5px;height:5px;border-radius:50%;background:#e95420;"></div>
<div class="r" style="left:613.5px;top:760px;width:5px;height:5px;border-radius:50%;background:#e95420;"></div>
<div class="r" style="left:671.5px;top:760px;width:5px;height:5px;border-radius:50%;background:#e95420;"></div>
<div class="r" style="left:729.5px;top:760px;width:5px;height:5px;border-radius:50%;background:#e95420;"></div>
</body></html>
